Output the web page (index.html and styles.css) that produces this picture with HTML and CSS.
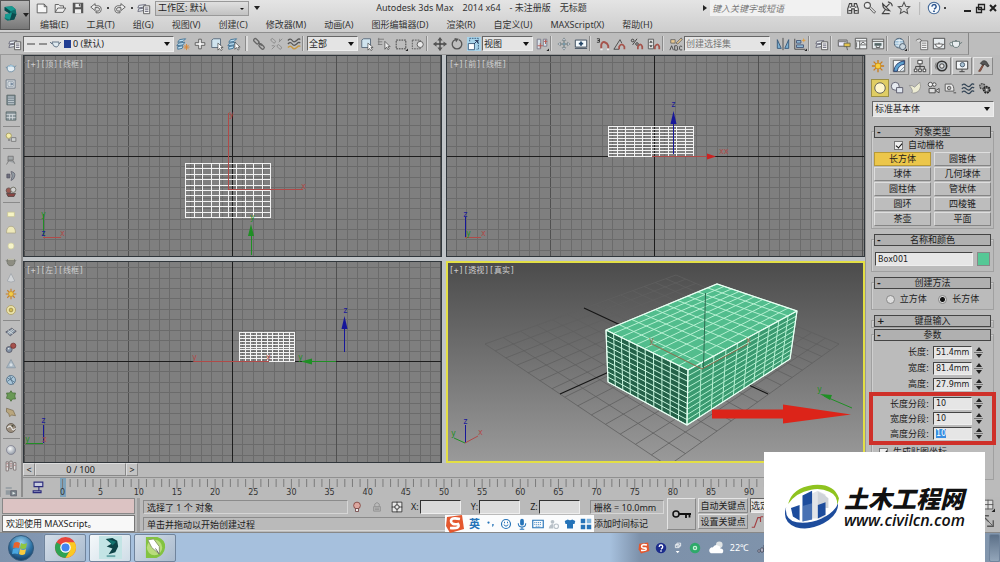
FILE: index.html
```html
<!DOCTYPE html>
<html lang="zh-CN">
<head>
    <meta charset="UTF-8">
    <meta name="viewport" content="width=device-width, initial-scale=1.0">
    <title>Autodesk 3ds Max 2014 x64 - 未注册版 无标题</title>
    <link rel="stylesheet" href="styles.css">
</head>
<body>
    <svg class="defs" aria-hidden="true">
        <defs>
            <linearGradient id="sky" x1="0" y1="0" x2="0" y2="1">
                <stop offset="0" stop-color="#4b4b4b"/><stop offset="1" stop-color="#9b9b9b"/>
            </linearGradient>
            <radialGradient id="ball" cx=".4" cy=".35" r=".7">
                <stop offset="0" stop-color="#fff"/><stop offset="1" stop-color="#8792a0"/>
            </radialGradient>
            <radialGradient id="orb" cx=".5" cy=".3" r=".7">
                <stop offset="0" stop-color="#9fd4ee"/><stop offset=".6" stop-color="#2f75a8"/><stop offset="1" stop-color="#173e66"/>
            </radialGradient>

            <symbol id="i-new" viewBox="0 0 16 16"><path d="M2.500 3.500h8l3 3v7h-11zM10.500 3.500v3h3" fill="#f6f6f6" stroke="#555"/></symbol>
            <symbol id="i-open" viewBox="0 0 16 16"><path d="M2.500 13V4h4l1.500 1.500h4V8M2.500 13l3-5h9l-3 5z" fill="#eee" stroke="#555"/></symbol>
            <symbol id="i-save" viewBox="0 0 16 16"><path d="M2 2h12v12H2z" fill="#555"/><path d="M5 3h6v4H5zM4.500 9.500h7V14h-7z" fill="#eee"/><path d="M9 3.500h1.500v2.500H9z" fill="#555"/></symbol>
            <symbol id="i-undo" viewBox="0 0 16 16"><path d="M2 7l5-4v2.500h4q3 .5 3 4t-3 4H8v-2h2.500q1.500 0 1.500-2t-2-2H7V11z" fill="#eee" stroke="#555"/></symbol>
            <symbol id="i-redo" viewBox="0 0 16 16"><path d="M14 7L9 3v2.500H5q-3 .5-3 4t3 4h3v-2H5.500Q4 11.500 4 9.500t2-2h3V11z" fill="#eee" stroke="#555"/></symbol>
            <symbol id="i-list" viewBox="0 0 16 16"><path d="M2 5l8-1-2 3-7 1zM2 9l7-1-2 3-6 1z" fill="#e8eef2" stroke="#667"/><path d="M7.500 5.500h7v9h-7z" fill="#f4f4f4" stroke="#555"/><path d="M9 8h4M9 10h4M9 12h4" stroke="#667"/></symbol>
            <symbol id="i-laynew" viewBox="0 0 16 16"><path d="M4 3l7-1-3 3-6 1zM3 7l7-1-2 3-7 1zM2 11l6-1-1 3-5 1z" fill="#bfe0f4" stroke="#3d6f92"/><path d="M12 8v7M8.500 11.500h7M9.500 9l5 5M14.500 9l-5 5" stroke="#d98735"/></symbol>
            <symbol id="i-plus" viewBox="0 0 16 16"><path d="M6.500 2.500h3v4h4v3h-4v4h-3v-4h-4v-3h4z" fill="#f4f4f4" stroke="#555"/></symbol>
            <symbol id="i-selbox" viewBox="0 0 16 16"><path d="M2 3.500l2-1.500h8v8l-2 2H2z" fill="#cfe3ee" stroke="#567"/><path d="M9 7v8l2-2 1.500 2.500 1.500-1-1.500-2.500H15z" fill="#fff" stroke="#333" stroke-width=".7"/></symbol>
            <symbol id="i-laysel" viewBox="0 0 16 16"><path d="M4 3l7-1-3 3-6 1zM3 7l7-1-2 3-7 1zM2 11l6-1-1 3-5 1z" fill="#bfe0f4" stroke="#3d6f92"/><path d="M9 6v8l2-2 1.500 3 1.500-1-1.500-2.500H15z" fill="#fff" stroke="#333" stroke-width=".7"/></symbol>
            <symbol id="i-link" viewBox="0 0 16 16"><g fill="none" stroke="#666" stroke-width="1.500"><rect x="1" y="3" width="7" height="3.500" rx="1.700" transform="rotate(45 4 4)"/><rect x="7" y="9" width="7" height="3.500" rx="1.700" transform="rotate(45 10 10)"/><path d="M6 6l4 4"/></g></symbol>
            <symbol id="i-unlink" viewBox="0 0 16 16"><g fill="none" stroke="#888"><rect x="1" y="3" width="6" height="3" rx="1.500" transform="rotate(45 4 4)"/><rect x="8" y="10" width="6" height="3" rx="1.500" transform="rotate(45 11 11)"/><path d="M14 2l-4 4M6 10l-4 4M11 2v3M2 10h3"/></g></symbol>
            <symbol id="i-bind" viewBox="0 0 16 16"><path d="M1 4q3-3 5 0t5 0 4-1M1 8q3-3 5 0t5 0 4-1" fill="none" stroke="#555" stroke-width="1.400"/><path d="M1 12q3-3 5 0t5 0 4-1" fill="none" stroke="#c79a45" stroke-width="1.600"/></symbol>
            <symbol id="i-byname" viewBox="0 0 16 16"><path d="M1 2.500h7M1 5.500h5M1 8.500h5M2 1v8" stroke="#777"/><path d="M9 5v9l2-2.500 1.500 3 1.500-1-1.500-2.500H15z" fill="#eee" stroke="#444" stroke-width=".8"/></symbol>
            <symbol id="i-region" viewBox="0 0 16 16"><path d="M2.500 3.500h11v10h-11z" fill="none" stroke="#333" stroke-dasharray="2 1"/><path d="M16 13v3h-3z" fill="#222"/></symbol>
            <symbol id="i-window" viewBox="0 0 16 16"><path d="M1.500 3.500h9v10h-9z" fill="none" stroke="#555" stroke-dasharray="2 1"/><circle cx="10.500" cy="8.500" r="3.500" fill="#e9e9e9" stroke="#555"/></symbol>
            <symbol id="i-move" viewBox="0 0 16 16"><path d="M8 1v14M1 8h14" stroke="#444" stroke-width="1.500"/><path d="M8 0l3 4H5zM8 16l3-4H5zM0 8l4-3v6zM16 8l-4-3v6z" fill="#555"/></symbol>
            <symbol id="i-rotate" viewBox="0 0 16 16"><path d="M10 3a5.500 5.500 0 1 1-4 0" fill="none" stroke="#555" stroke-width="1.500"/><path d="M5 1l5 1-3 4z" fill="#555"/></symbol>
            <symbol id="i-scale" viewBox="0 0 16 16"><path d="M0 0h16v16H0z" fill="#a9d4ea"/><path d="M1.500 7.500h7v7h-7z" fill="#fff" stroke="#357"/><path d="M3 5V1.500h10V14h-2" fill="none" stroke="#357" stroke-dasharray="2 1"/><path d="M8 8l4-4M9 4h3v3" fill="none" stroke="#235"/></symbol>
            <symbol id="i-pivot" viewBox="0 0 16 16"><path d="M2.500 2.500h4v11h-4zM9.500 2.500h4v8h-4z" fill="#d9e3ea" stroke="#778"/><path d="M6 7v6M3 10h6M10 5h4M12 3v5" stroke="#b6534c"/><path d="M16 13v3h-3z" fill="#222"/></symbol>
            <symbol id="i-manip" viewBox="0 0 16 16"><path d="M8 2v12M2 8h12" stroke="#566"/><path d="M8 1l2 3H6zM8 15l2-3H6zM1 8l3-2v4zM15 8l-3-2v4z" fill="#dde" stroke="#677" stroke-width=".7"/><circle cx="8" cy="8" r="1.500" fill="#79a"/></symbol>
            <symbol id="i-keybd" viewBox="0 0 16 16"><path d="M1.500 3.500h13v8h-13z" fill="#f5fafd" stroke="#345"/><path d="M1 13h14" stroke="#345"/><path d="M8 5v5M5.500 7.500h5" stroke="#246" stroke-width="2"/></symbol>
            <symbol id="i-magnet" viewBox="0 0 16 16"><path d="M6 13V9q1-4 4-3t4 4v3" fill="none" stroke="#a5544c" stroke-width="2.200"/><path d="M5 14h2.500M12.500 14H15" stroke="#eee" stroke-width="2"/><path d="M1 2h3v2H2h2v2H1" fill="none" stroke="#333"/></symbol>
            <symbol id="i-angle" viewBox="0 0 16 16"><path d="M1 14L8 3l2 4M1 14h6" fill="none" stroke="#444"/><path d="M7 14v-3q3-5 6 0v3" fill="none" stroke="#a5544c" stroke-width="2"/></symbol>
            <symbol id="i-pct" viewBox="0 0 16 16"><path d="M8 2L3 9" stroke="#333"/><circle cx="3" cy="4" r="1.500" fill="none" stroke="#333"/><circle cx="8" cy="8" r="1.500" fill="none" stroke="#333"/><path d="M9 14v-3q3-5 5 0v3" fill="none" stroke="#a5544c" stroke-width="2"/></symbol>
            <symbol id="i-spin" viewBox="0 0 16 16"><path d="M1.500 2.500h6v11h-6z" fill="#ddd" stroke="#555"/><path d="M4.500 4l2 2.500h-4zM4.500 12l2-2.500h-4z" fill="#444"/><path d="M9 14v-3q3-5 5 0v3" fill="none" stroke="#a5544c" stroke-width="2"/></symbol>
            <symbol id="i-named" viewBox="0 0 16 16"><path d="M2 3h5v4H2zM8 7l6-6 1 2-5 5z" fill="#e8c890" stroke="#555" stroke-width=".8"/><path d="M1 15l2-5 2 5M6.500 10v5h3q1-1 0-2.500 1-2-.5-2.500zM15 11q-3-2-3 1.500t3 2" fill="none" stroke="#444"/></symbol>
            <symbol id="i-mirror" viewBox="0 0 16 16"><path d="M1.500 13V3L6 13zM14.500 13V3L10 13z" fill="#7db1d3" stroke="#357"/><path d="M8 1v14" stroke="#444"/></symbol>
            <symbol id="i-align" viewBox="0 0 16 16"><path d="M2 2v12h12" fill="none" stroke="#444"/><path d="M4 4h5v3H4zM4 9h8v3H4z" fill="#8fb8d2" stroke="#457"/><path d="M12 1l1 2 2 .5-2 1-.5 2-1-2-2-.5 2-1z" fill="#e2a13f"/><path d="M16 13v3h-3z" fill="#222"/></symbol>
            <symbol id="i-ribbon" viewBox="0 0 16 16"><path d="M1.500 3.500h10v7h-10z" fill="#eef" stroke="#555"/><path d="M2 4h9v2H2z" fill="#888"/><path d="M8 7h7v4H8z" fill="#e3c34d" stroke="#665"/><path d="M11 11l1 4" stroke="#555"/></symbol>
            <symbol id="i-curve" viewBox="0 0 16 16"><path d="M1.500 1.500h13v12h-13zM1.500 4.500h13M6.500 4.500v9M6.500 9h8" fill="#f0f3f5" stroke="#555"/><path d="M3 6v6M8 8q2-4 5 0" fill="none" stroke="#555"/></symbol>
            <symbol id="i-schem" viewBox="0 0 16 16"><path d="M1.500 2.500h13v11h-13zM1.500 5h13" fill="#e7ecef" stroke="#555"/><path d="M4 7h8v3H4z" fill="#566"/><path d="M6 10v2h4v-2" fill="none" stroke="#555"/></symbol>
            <symbol id="i-mat" viewBox="0 0 16 16"><circle cx="7" cy="7" r="5.500" fill="#9fc0d8" stroke="#456"/><path d="M3 4h8M2 7h10M3 10h8M7 2v10" stroke="#e8f2f8"/><circle cx="11" cy="11" r="3.500" fill="#c9d5dd" stroke="#456"/><path d="M16 13v3h-3z" fill="#222"/></symbol>
            <symbol id="i-rset" viewBox="0 0 16 16"><path d="M1 4q5-4 7 1l-3 1" fill="#ddd" stroke="#666"/><path d="M6.500 4.500h8v10h-8z" fill="#f2f2f2" stroke="#666"/><path d="M8 7h5M8 9.500h5M8 12h5" stroke="#777"/></symbol>
            <symbol id="i-rframe" viewBox="0 0 16 16"><path d="M1.500 1.500h13v12h-13z" fill="#e7ecef" stroke="#444"/><path d="M4 8h8q0 4-4 4T4 8zM12 9l2-1M4 9L2.500 8M7 7h2" fill="#fff" stroke="#555"/></symbol>
            <symbol id="i-teapot" viewBox="0 0 16 16"><path d="M4 5h8q1 7-4 7T4 5zM12 8l3-2M4 7Q1 5 1 8t4 2M7 4h2" fill="#e9eef0" stroke="#677"/></symbol>

            <symbol id="i-star" viewBox="0 0 16 16"><path d="M8 1.500l2 4.500 4.500.500-3.300 3 1 4.700L8 11.800l-4.200 2.400 1-4.700L1.500 6.500 6 6z" fill="none" stroke="#555" stroke-width="1.200"/></symbol>
            <symbol id="i-bino" viewBox="0 0 16 16"><path d="M2 14V9l2-6h2.500v3h3V3H12l2 6v5h-4.500V9h-3v5zM4 7h2M10 7h2M3 11h3M10 11h3" fill="#eee" stroke="#444" stroke-width="1.300"/></symbol>
            <symbol id="i-key" viewBox="0 0 16 16"><circle cx="5" cy="5" r="3.500" fill="#eee" stroke="#555" stroke-width="1.300"/><path d="M7 8l5.500 6 2-1.500L9 7" fill="#ddd" stroke="#555"/></symbol>
            <symbol id="i-sat" viewBox="0 0 16 16"><path d="M3 3q0 7 8 8zM3 14l3-4M2 14.500h9M7 7l4-4M9 1q5 1 5 5" fill="#ddd" stroke="#444" stroke-width="1.300"/></symbol>
            <symbol id="i-help" viewBox="0 0 16 16"><circle cx="8" cy="8" r="6.500" fill="#f4f8fc" stroke="#456a99" stroke-width="1.200"/><path d="M5.500 6.500Q6 4 8 4t2.400 2T8 9.300" fill="none" stroke="#2f5791" stroke-width="1.700"/><path d="M7 10.800h2v1.800H7z" fill="#2f5791"/></symbol>

            <symbol id="i-sun" viewBox="0 0 16 16"><path d="M8 1v14M1 8h14M3 3l10 10M13 3L3 13" stroke="#c97c1c" stroke-width="1.500"/><circle cx="8" cy="8" r="3.300" fill="#f8cf3c" stroke="#c98a1c"/></symbol>
            <symbol id="i-modify" viewBox="0 0 16 16"><path d="M1.500 1.500h13v13h-13z" fill="#f2f6f8" stroke="#555"/><path d="M2 14Q3 4 14 2v4Q7 7 6 14z" fill="#5fa3d0" stroke="#236"/><path d="M9 14l5-5M12 14l2-2" stroke="#678"/></symbol>
            <symbol id="i-hier" viewBox="0 0 16 16"><path d="M5.500 1.500h5v4h-5zM1.500 11.500h3v3h-3zM6.500 11.500h3v3h-3zM11.500 11.500h3v3h-3z" fill="#fff" stroke="#333"/><path d="M8 6v5M3 11V8.500h10V11" fill="none" stroke="#333"/></symbol>
            <symbol id="i-motion" viewBox="0 0 16 16"><circle cx="9" cy="8" r="5.500" fill="#b9c0c5" stroke="#333" stroke-width="1.800"/><circle cx="9" cy="8" r="2.500" fill="#e8e8e8" stroke="#333"/><path d="M2.500 4Q0 8 2.500 12" fill="none" stroke="#777"/></symbol>
            <symbol id="i-display" viewBox="0 0 16 16"><path d="M1.500 2.500h13v9h-13zM5 14.500h6M8 12v2" fill="#f4f7f9" stroke="#333"/><circle cx="8.500" cy="6.500" r="2.500" fill="#a9c3d6" stroke="#456"/></symbol>
            <symbol id="i-hammer" viewBox="0 0 16 16"><path d="M8 6l2-1.500L5 14H3z" fill="#a9534a" stroke="#643"/><path d="M5 5Q8 0 12 3l3 5-2 1-3-3-2 1z" fill="#555" stroke="#222" stroke-width=".7"/></symbol>
            <symbol id="i-sphere" viewBox="0 0 16 16"><circle cx="8" cy="8" r="6" fill="#fff7cd" stroke="#555"/></symbol>
            <symbol id="i-shapes" viewBox="0 0 16 16"><circle cx="6" cy="6" r="4.500" fill="#e6eaf0" stroke="#556"/><path d="M7.500 7.500h7v6h-7z" fill="#dfe5ee" stroke="#556"/></symbol>
            <symbol id="i-light" viewBox="0 0 16 16"><path d="M1.500 5q4 0 6 2l6-5.500q2 5-.5 9-5 5-9 2.500 3-1-2.500-8z" fill="#ecebd2" stroke="#888" stroke-width=".8"/></symbol>
            <symbol id="i-camera" viewBox="0 0 16 16"><circle cx="5" cy="4" r="2.500" fill="#eee" stroke="#444"/><circle cx="9.500" cy="4" r="2" fill="#eee" stroke="#444"/><path d="M3.500 8.500h7v5h-7zM11 11l4-2.500v5z" fill="#ddd" stroke="#444"/></symbol>
            <symbol id="i-tape" viewBox="0 0 16 16"><path d="M2.500 3.500h7q3 1 3 8h-10z" fill="#e8e8e8" stroke="#555"/><circle cx="7" cy="8" r="2" fill="#bbb" stroke="#555"/><path d="M12 13.500h3" stroke="#444"/></symbol>
            <symbol id="i-waves" viewBox="0 0 16 16"><path d="M1 5q2-3 5 0t5 0 4-1M1 9q2-3 5 0t5 0 4-1M1 13q2-3 5 0t5 0 4-1" fill="none" stroke="#345" stroke-width="1.400"/></symbol>
            <symbol id="i-gears" viewBox="0 0 16 16"><circle cx="5" cy="6" r="3" fill="#999" stroke="#444" stroke-width="1.500" stroke-dasharray="2 1"/><circle cx="10" cy="10" r="3.500" fill="#777" stroke="#222" stroke-width="2" stroke-dasharray="2 1"/><circle cx="10" cy="10" r="1" fill="#eee"/></symbol>

            <symbol id="i-cloudpot" viewBox="0 0 16 16"><path d="M3 6q5-4 9 0 3 5-3 7-7 1-6-7zM12 7l3-2M3 8L1 7" fill="#e8f2f8" stroke="#58809c"/><path d="M5 6q3-2 6 0" stroke="#9cc5dd" stroke-width="2" fill="none"/></symbol>
            <symbol id="i-pane" viewBox="0 0 16 16"><path d="M1.500 2.500h12v11h-12z" fill="#dbe1e4" stroke="#567"/><path d="M4 5h7v6H4z" fill="#f6f8f9" stroke="#789"/><path d="M6 8h4M8 6l2 2-2 2" stroke="#246" fill="none"/></symbol>
            <symbol id="i-calc" viewBox="0 0 16 16"><path d="M2.500 1.500h11v13h-11z" fill="#778791" stroke="#455"/><path d="M4 4h8M4 7h8M4 10h8M4 13h8" stroke="#d4dde1"/></symbol>
            <symbol id="i-grid" viewBox="0 0 16 16"><path d="M1.500 2.500h13v11h-13z" fill="#8a979e" stroke="#455"/><path d="M2 6h12M2 10h12M6 6v7M10 6v7" stroke="#d8dfe2"/></symbol>
            <symbol id="i-bulb" viewBox="0 0 16 16"><circle cx="5" cy="5" r="3.500" fill="#fbf3a8" stroke="#998f48"/><path d="M4 9h3v3H4z" fill="#888"/><path d="M8.500 7.500h6v5h-6z" fill="#cfd3d4" stroke="#666"/></symbol>
            <symbol id="i-seat" viewBox="0 0 16 16"><path d="M4 3h7v5H4zM3 9h8l2 4M5 9l-3 5" fill="#a2a7aa" stroke="#666"/></symbol>
            <symbol id="i-speaker" viewBox="0 0 16 16"><path d="M2.500 5.500h4v5h-4z" fill="#667" stroke="#445"/><path d="M8 2q6 1 5 6t-5 6q3-6 0-12z" fill="#8b969e" stroke="#556"/></symbol>
            <symbol id="i-car" viewBox="0 0 16 16"><circle cx="5" cy="6" r="3.500" fill="#995047" stroke="#544"/><circle cx="11" cy="5" r="3.500" fill="#d4d4d4" stroke="#554"/><path d="M2 10h12l-2 4H4z" fill="#833a36" stroke="#433"/></symbol>
            <symbol id="i-card" viewBox="0 0 16 16"><path d="M3.500 5.500h9v6h-9z" fill="#fdfbc4" stroke="#c9c692"/></symbol>
            <symbol id="i-dome" viewBox="0 0 16 16"><path d="M2 12Q2 3 8 3t6 9z" fill="#f4eeba" stroke="#aaa380"/></symbol>
            <symbol id="i-glow" viewBox="0 0 16 16"><circle cx="8" cy="8" r="4" fill="#fdfbcb" stroke="#d6d3a0"/></symbol>
            <symbol id="i-pot" viewBox="0 0 16 16"><path d="M3 5h10q1 8-5 8T3 5zM13 7l2-1M3 7L1 6" fill="#88897c" stroke="#66685e"/><path d="M4 4.500h8" stroke="#bfbfaa" stroke-width="2"/></symbol>
            <symbol id="i-cone" viewBox="0 0 16 16"><path d="M8 2l5 10q-5 3-10 0z" fill="#d5d8dc" stroke="#9ba1a8"/></symbol>
            <symbol id="i-ring" viewBox="0 0 16 16"><circle cx="8" cy="8" r="6" fill="#f1e8a8" stroke="#a59453"/><circle cx="8" cy="8" r="2.500" fill="#d5bb48" stroke="#8d7b34"/></symbol>
            <symbol id="i-plane" viewBox="0 0 16 16"><path d="M1 8l8-5 6 4-8 6z" fill="#7f90a0" stroke="#445"/><path d="M3 10l8-6M5 11l8-6M4 6l7 5" stroke="#dfe6ea"/></symbol>
            <symbol id="i-balls" viewBox="0 0 16 16"><circle cx="5.500" cy="10" r="4" fill="#7d8ea3" stroke="#445"/><circle cx="11" cy="5" r="3.500" fill="#a44640" stroke="#622"/><circle cx="5" cy="9" r="1" fill="#fff"/></symbol>
            <symbol id="i-tri" viewBox="0 0 16 16"><path d="M8 2l6 11H2z" fill="#a9b9c6" stroke="#8193a0"/><circle cx="8" cy="9" r="2" fill="#dce5ea"/></symbol>
            <symbol id="i-globe" viewBox="0 0 16 16"><circle cx="8" cy="8" r="6" fill="#a9c8dc" stroke="#41627c"/><path d="M3 5l10 6M3 10l8-6M6 2l5 12" stroke="#41627c"/></symbol>
            <symbol id="i-leaf" viewBox="0 0 16 16"><path d="M8 1l2 3 4 0-1 4 1 4-4 0-2 3-2-3-4-1 1-4-1-3 4 0z" fill="#61964a" stroke="#3c662c"/></symbol>
            <symbol id="i-hand" viewBox="0 0 16 16"><path d="M2 3l9 3 3 7-5-1-3 2-1-4-3-2z" fill="#b9a478" stroke="#786848"/></symbol>
            <symbol id="i-marble" viewBox="0 0 16 16"><circle cx="8" cy="8" r="6" fill="#9a8c7a" stroke="#4b433a"/><path d="M3 8q4-5 6 0t5 0" stroke="#eee" fill="none" stroke-width="1.500"/><circle cx="10" cy="5" r="1.500" fill="#443"/></symbol>
            <symbol id="i-silver" viewBox="0 0 16 16"><circle cx="8" cy="8" r="6" fill="url(#ball)" stroke="#778"/></symbol>
            <symbol id="i-bars" viewBox="0 0 16 16"><path d="M1.500 2.500h3v12h-3zM6.500 1.500h3v10h-3zM11.500 3.500h3v10h-3z" fill="#f2f2f2" stroke="#655"/><path d="M2 5h2M7 5h2M12 7h2M2 9h2M7 8h2" stroke="#955"/></symbol>
            <symbol id="i-mini" viewBox="0 0 16 16"><path d="M1 3h8v2H1zM1 7h6v6H1z" fill="#8d979d"/><path d="M7.500 7.500h8v7h-8z" fill="#6f7b83" stroke="#556"/><path d="M10 9l4 2-4 2z" fill="#e6eaec"/></symbol>
            <symbol id="i-track" viewBox="0 0 16 16"><path d="M3.500 2.500h10v5h-10zM2.500 12.500h9v2h-9zM9 8v4" fill="#c8cce0" stroke="#2b2b7c" stroke-width="1.300"/></symbol>
            <symbol id="i-iso" viewBox="0 0 16 16"><circle cx="8" cy="6" r="4.500" fill="#dca8a0" stroke="#7a342f"/><path d="M6 10h4v4H6z" fill="#eee" stroke="#633"/></symbol>
            <symbol id="i-lock" viewBox="0 0 16 16"><path d="M5 7V4q3-4 6 0v3M3.500 7.500h9v6h-9zM5 9.500h6M5 11.500h6" fill="none" stroke="#888"/></symbol>
            <symbol id="i-abs" viewBox="0 0 16 16"><path d="M1.500 1.500h13v13h-13z" fill="#e9e9e9" stroke="#222"/><circle cx="8" cy="8" r="3" fill="none" stroke="#222"/><path d="M8 1v5M8 10v5M1 8h5M10 8h5" stroke="#222"/></symbol>
            <symbol id="i-nav" viewBox="0 0 16 16"><path d="M2.500 2.500h11v10h-11zM8 2v11M2 7.500h12" fill="#ddd" stroke="#555"/><path d="M16 12v4h-4z" fill="#222"/></symbol>
            <symbol id="i-max" viewBox="0 0 16 16"><path d="M2 9V2h7M2 2l7 7M7 14h7V7" fill="none" stroke="#555" stroke-width="1.500"/><path d="M8 8l5 5" stroke="#555"/></symbol>
            <symbol id="i-3ds" viewBox="0 0 30 30"><path d="M5 4l10-1 5 4 1 7-3 7-9 2-4-3 1-6 6-1-7-4z" fill="#0e6f6c"/><path d="M5 4l10-1 5 4-7 3zM6 14l9-2 5 3-8 6-7-2z" fill="#159a90"/><path d="M5 4l8 6-1 3-7-4zM15 12l6 2-3 7-6 1z" fill="#0a4b4d"/></symbol>
            <symbol id="i-sogou" viewBox="0 0 20 20"><path d="M2 3l15-2 2 14-14 4-4-7z" fill="#e4572e"/><path d="M15 5Q6 3 6 7t7 3q3 5-8 4" fill="none" stroke="#fff" stroke-width="2.600"/></symbol>
        </defs>
    </svg>

    <header class="titlebar">
        <button class="app-menu" aria-label="应用程序菜单"><svg class="logo"><use href="#i-3ds"/></svg><i class="caret"></i></button>
        <div class="title-rows">
            <div class="title-row">
                <div class="quick">
                    <button aria-label="新建"><svg><use href="#i-new"/></svg></button>
                    <button aria-label="打开"><svg><use href="#i-open"/></svg></button>
                    <button aria-label="保存"><svg><use href="#i-save"/></svg></button>
                    <button aria-label="撤消"><svg><use href="#i-undo"/></svg></button>
                    <i class="dot"></i>
                    <button aria-label="重做"><svg><use href="#i-redo"/></svg></button>
                    <i class="dot"></i>
                    <button aria-label="项目"><svg><use href="#i-list"/></svg></button>
                    <label class="combo workspace-combo"><select aria-label="工作区"><option>工作区: 默认</option></select></label>
                    <i class="caret"></i>
                </div>
                <h1><span>Autodesk 3ds Max</span><span>2014 x64</span><span>- 未注册版</span><span>无标题</span></h1>
                <div class="info">
                    <i class="caret caret-right"></i>
                    <input type="text" aria-label="搜索" placeholder="键入关键字或短语">
                    <button aria-label="查找"><svg><use href="#i-bino"/></svg></button>
                    <button aria-label="登录"><svg><use href="#i-key"/></svg></button>
                    <button aria-label="通讯中心"><svg><use href="#i-sat"/></svg></button>
                    <button aria-label="收藏"><svg><use href="#i-star"/></svg></button>
                    <i class="sep"></i>
                    <button aria-label="帮助"><svg><use href="#i-help"/></svg></button>
                    <i class="dot"></i>
                </div>
                <div class="win-buttons">
                    <button aria-label="最小化"><svg viewBox="0 0 12 12"><path d="M3 9h7" stroke="#222" stroke-width="2"/></svg></button>
                    <button aria-label="还原"><svg viewBox="0 0 12 12"><path d="M4.500 2.500h6v5h-6zM2.500 5.500h5v5h-5z" fill="#ddd" stroke="#222" stroke-width="1.300"/></svg></button>
                    <button aria-label="关闭"><svg viewBox="0 0 12 12"><path d="M3 3l6 6M9 3l-6 6" stroke="#222" stroke-width="2"/></svg></button>
                </div>
            </div>
            <nav class="menu">
                <a href="#">编辑(E)</a><a href="#">工具(T)</a><a href="#">组(G)</a><a href="#">视图(V)</a><a href="#">创建(C)</a><a href="#">修改器(M)</a><a href="#">动画(A)</a><a href="#">图形编辑器(D)</a><a href="#">渲染(R)</a><a href="#">自定义(U)</a><a href="#">MAXScript(X)</a><a href="#">帮助(H)</a>
            </nav>
        </div>
    </header>

    <div class="toolbar">
        <div class="tools">
            <button aria-label="层管理器"><svg><use href="#i-list"/></svg></button>
            <div class="combo layer-combo">
                <svg viewBox="0 0 46 12"><path d="M2 6h8M14 6h8" stroke="#777" stroke-width="1.500"/><path d="M27 4h7q0 5-3 5t-4-5zM34 6l2-2M27 6l-2-2" fill="#dfeaf0" stroke="#678"/><path d="M39 2h7v8h-7z" fill="#233f93"/></svg>
                <select aria-label="层"><option>0 (默认)</option></select>
            </div>
            <button aria-label="新建层"><svg><use href="#i-laynew"/></svg></button>
            <button aria-label="添加到层"><svg><use href="#i-plus"/></svg></button>
            <button aria-label="选择层对象"><svg><use href="#i-selbox"/></svg></button>
            <button aria-label="设为当前层"><svg><use href="#i-laysel"/></svg></button>
            <i class="sep wide"></i>
            <button aria-label="链接"><svg><use href="#i-link"/></svg></button>
            <button aria-label="取消链接"><svg><use href="#i-unlink"/></svg></button>
            <button aria-label="绑定到空间扭曲"><svg><use href="#i-bind"/></svg></button>
            <i class="sep"></i>
            <label class="combo short-combo"><select aria-label="选择过滤器"><option>全部</option></select></label>
            <button aria-label="选择"><svg><use href="#i-selbox"/></svg></button>
            <button aria-label="按名称选择"><svg><use href="#i-byname"/></svg></button>
            <button aria-label="选择区域"><svg><use href="#i-region"/></svg></button>
            <button aria-label="窗口/交叉"><svg><use href="#i-window"/></svg></button>
            <i class="sep"></i>
            <button aria-label="移动"><svg><use href="#i-move"/></svg></button>
            <button aria-label="旋转"><svg><use href="#i-rotate"/></svg></button>
            <button aria-label="缩放"><svg><use href="#i-scale"/></svg></button>
            <label class="combo short-combo"><select aria-label="参考坐标系"><option>视图</option></select></label>
            <button aria-label="轴点中心"><svg><use href="#i-pivot"/></svg></button>
            <i class="sep"></i>
            <button aria-label="操纵"><svg><use href="#i-manip"/></svg></button>
            <button aria-label="键盘快捷键覆盖"><svg><use href="#i-keybd"/></svg></button>
            <i class="sep"></i>
            <button aria-label="捕捉"><svg><use href="#i-magnet"/></svg></button>
            <button aria-label="角度捕捉"><svg><use href="#i-angle"/></svg></button>
            <button aria-label="百分比捕捉"><svg><use href="#i-pct"/></svg></button>
            <button aria-label="微调器捕捉"><svg><use href="#i-spin"/></svg></button>
            <i class="sep"></i>
            <button aria-label="编辑命名选择集"><svg><use href="#i-named"/></svg></button>
            <label class="combo set-combo"><select aria-label="命名选择集"><option>创建选择集</option></select></label>
            <button aria-label="镜像"><svg><use href="#i-mirror"/></svg></button>
            <button aria-label="对齐"><svg><use href="#i-align"/></svg></button>
            <i class="sep"></i>
            <button aria-label="层"><svg><use href="#i-list"/></svg></button>
            <i class="sep"></i>
            <button aria-label="功能区"><svg><use href="#i-ribbon"/></svg></button>
            <button aria-label="曲线编辑器"><svg><use href="#i-curve"/></svg></button>
            <button aria-label="图解视图"><svg><use href="#i-schem"/></svg></button>
            <i class="sep"></i>
            <button aria-label="材质编辑器"><svg><use href="#i-mat"/></svg></button>
            <i class="sep"></i>
            <button aria-label="渲染设置"><svg><use href="#i-rset"/></svg></button>
            <button aria-label="渲染帧窗口"><svg><use href="#i-rframe"/></svg></button>
            <button aria-label="渲染"><svg><use href="#i-teapot"/></svg></button>
        </div>
    </div>

    <main class="workspace">
        <aside class="sidebar">
            <svg><use href="#i-cloudpot"/></svg><svg><use href="#i-pane"/></svg><svg><use href="#i-calc"/></svg><svg><use href="#i-grid"/></svg>
            <hr>
            <svg><use href="#i-bulb"/></svg>
            <hr>
            <svg><use href="#i-seat"/></svg><svg><use href="#i-speaker"/></svg><svg><use href="#i-car"/></svg>
            <hr>
            <svg><use href="#i-card"/></svg><svg><use href="#i-dome"/></svg><svg><use href="#i-glow"/></svg><svg><use href="#i-pot"/></svg><svg><use href="#i-cone"/></svg><svg><use href="#i-sun"/></svg><svg><use href="#i-ring"/></svg>
            <hr>
            <svg><use href="#i-plane"/></svg><svg><use href="#i-balls"/></svg><svg><use href="#i-tri"/></svg><svg><use href="#i-globe"/></svg><svg><use href="#i-leaf"/></svg><svg><use href="#i-hand"/></svg><svg><use href="#i-marble"/></svg>
            <hr>
            <svg><use href="#i-silver"/></svg><svg><use href="#i-bars"/></svg>
            <svg class="corner"><use href="#i-mini"/></svg>
        </aside>

        <section class="stage">
            <div class="viewports">
                <svg id="top" class="view" viewBox="24 56 417 200" preserveAspectRatio="xMidYMid slice"></svg>
                <svg id="front" class="view" viewBox="447 56 417 200" preserveAspectRatio="xMidYMid slice"></svg>
                <svg id="left" class="view" viewBox="24 262 417 200" preserveAspectRatio="xMidYMid slice"></svg>
                <svg id="persp" class="view active" viewBox="448 263 415 198" preserveAspectRatio="xMidYMid slice"></svg>
            </div>
            <div class="time-slider">
                <button aria-label="上一帧">&lt;</button><button class="thumb">0 / 100</button><button aria-label="下一帧">&gt;</button>
            </div>
            <svg id="ruler" class="ruler" viewBox="23 477 842 20" preserveAspectRatio="xMinYMin slice"></svg>
        </section>

        <aside class="panel">
            <div class="tabs">
                <button class="on" aria-label="创建"><svg><use href="#i-sun"/></svg></button>
                <button aria-label="修改"><svg><use href="#i-modify"/></svg></button>
                <button aria-label="层次"><svg><use href="#i-hier"/></svg></button>
                <button aria-label="运动"><svg><use href="#i-motion"/></svg></button>
                <button aria-label="显示"><svg><use href="#i-display"/></svg></button>
                <button aria-label="实用程序"><svg><use href="#i-hammer"/></svg></button>
            </div>
            <div class="cats">
                <button class="on" aria-label="几何体"><svg><use href="#i-sphere"/></svg></button>
                <button aria-label="图形"><svg><use href="#i-shapes"/></svg></button>
                <button aria-label="灯光"><svg><use href="#i-light"/></svg></button>
                <button aria-label="摄影机"><svg><use href="#i-camera"/></svg></button>
                <button aria-label="辅助对象"><svg><use href="#i-tape"/></svg></button>
                <button aria-label="空间扭曲"><svg><use href="#i-waves"/></svg></button>
                <button aria-label="系统"><svg><use href="#i-gears"/></svg></button>
            </div>
            <label class="combo kind-combo"><select aria-label="类别"><option>标准基本体</option></select></label>

            <section class="rollout first">
                <h2><b>-</b>对象类型</h2>
                <label class="check"><input type="checkbox" checked>自动栅格</label>
                <div class="types">
                    <button class="on">长方体</button><button>圆锥体</button>
                    <button>球体</button><button>几何球体</button>
                    <button>圆柱体</button><button>管状体</button>
                    <button>圆环</button><button>四棱锥</button>
                    <button>茶壶</button><button>平面</button>
                </div>
            </section>
            <section class="rollout naming">
                <h2><b>-</b>名称和颜色</h2>
                <div class="name-row"><input type="text" aria-label="名称" value="Box001"><button class="swatch" aria-label="颜色"></button></div>
            </section>
            <section class="rollout">
                <h2><b>-</b>创建方法</h2>
                <div class="radios">
                    <label><input type="radio" name="method">立方体</label>
                    <label><input type="radio" name="method" checked>长方体</label>
                </div>
            </section>
            <section class="rollout">
                <h2><b>+</b>键盘输入</h2>
            </section>
            <section class="rollout params">
                <h2><b>-</b>参数</h2>
                <div class="field"><label for="len">长度:</label><input id="len" type="text" value="51.4mm"><button class="spin" aria-label="调整长度"></button></div>
                <div class="field"><label for="wid">宽度:</label><input id="wid" type="text" value="81.4mm"><button class="spin" aria-label="调整宽度"></button></div>
                <div class="field"><label for="hei">高度:</label><input id="hei" type="text" value="27.9mm"><button class="spin" aria-label="调整高度"></button></div>
                <div class="segments">
                    <div class="field"><label for="lseg">长度分段:</label><input id="lseg" type="text" value="10"><button class="spin" aria-label="调整长度分段"></button></div>
                    <div class="field"><label for="wseg">宽度分段:</label><input id="wseg" type="text" value="10"><button class="spin" aria-label="调整宽度分段"></button></div>
                    <div class="field"><label for="hseg">高度分段:</label><input id="hseg" type="text" value="10"><button class="spin" aria-label="调整高度分段"></button></div>
                </div>
                <label class="check mapping"><input type="checkbox" checked>生成贴图坐标</label>
            </section>
        </aside>
    </main>

    <footer class="status">
        <div class="listener"><div class="macro"></div><div class="script">欢迎使用 MAXScript。</div></div>
        <div class="messages">
            <div class="line">
                <p class="well selected">选择了 1 个 对象</p>
                <svg><use href="#i-iso"/></svg><svg><use href="#i-lock"/></svg><svg><use href="#i-abs"/></svg>
                <label>X:<input type="text"></label><label>Y:<input type="text"></label><label>Z:<input type="text"></label>
                <p class="well grid-size">栅格 = 10.0mm</p>
            </div>
            <div class="line"><p class="well prompt">单击并拖动以开始创建过程</p><p class="tag">添加时间标记</p></div>
        </div>
        <button class="set-key" aria-label="设置关键点"><svg viewBox="0 0 20 10"><circle cx="4" cy="5" r="3" fill="none" stroke="#111" stroke-width="1.500"/><path d="M7 5h12M14 5v4M17.500 5v3.500" stroke="#111" stroke-width="1.800"/></svg></button>
        <div class="key-buttons"><button>自动关键点</button><button>设置关键点</button></div>
        <div class="key-filter"><label class="combo"><select aria-label="关键点过滤"><option>选定对象</option></select></label><svg viewBox="0 0 16 16"><path d="M2 14h3L9 3h3v5M12 2h3" fill="none" stroke="#a33f42" stroke-width="1.300"/></svg></div>
        <div class="nav-icons"><svg><use href="#i-nav"/></svg><svg><use href="#i-max"/></svg></div>

        <div class="ime">
            <svg class="s-logo"><use href="#i-sogou"/></svg>
            <b>英</b>
            <svg viewBox="0 0 16 16"><circle cx="6" cy="6" r="1.500" fill="#2573b8"/><path d="M11 8h2q0 3-2 4z" fill="#2573b8"/></svg>
            <svg viewBox="0 0 16 16"><circle cx="8" cy="8" r="6" fill="none" stroke="#2573b8" stroke-width="1.500"/><path d="M5 9q3 4 6 0M6 5v2M10 5v2" fill="none" stroke="#2573b8" stroke-width="1.300"/></svg>
            <svg viewBox="0 0 16 16"><rect x="5.500" y="1" width="5" height="9" rx="2.500" fill="#2573b8"/><path d="M3 7q0 5 5 5t5-5M8 12v3M5 15h6" fill="none" stroke="#2573b8" stroke-width="1.400"/></svg>
            <svg viewBox="0 0 16 16"><path d="M1 3h14v10H1z" fill="none" stroke="#2573b8" stroke-width="1.500"/><path d="M3 6h10M3 8.500h10M5 11h6" stroke="#2573b8" stroke-dasharray="1.500 1"/></svg>
            <svg viewBox="0 0 16 16"><circle cx="6" cy="5" r="2.500" fill="#b9c1c8"/><path d="M1 14q1-6 6-6v6z" fill="#b9c1c8"/><circle cx="11" cy="11" r="3" fill="none" stroke="#b9c1c8" stroke-width="1.500"/></svg>
            <svg viewBox="0 0 16 16"><path d="M1 4l4-2q3 2 6 0l4 2-1 4h-2v6H4V8H2z" fill="#2573b8"/></svg>
            <svg viewBox="0 0 16 16"><path d="M1 1h6v6H1zM1 9h6v6H1zM9 9h6v6H9z" fill="#2573b8"/><path d="M9 1h6v6H9z" fill="#7db3dc"/></svg>
        </div>
    </footer>

    <div class="taskbar">
        <button class="start" aria-label="开始"><svg viewBox="0 0 26 26"><circle cx="13" cy="13" r="12.500" fill="url(#orb)" stroke="#335a7c"/><path d="M6 8q3-2 6 0l-1 5q-3-1-6 0z" fill="#e9642c"/><path d="M13 8q3 2 6 0l-1 5q-3 2-6 0z" fill="#8fc640"/><path d="M5 14q3-1 6 0l-1 5q-3-1-6 0z" fill="#4aa6e0"/><path d="M12 14q3 2 6 0l-1 5q-3 2-6 0z" fill="#fbca3e"/></svg></button>
        <button aria-label="Chrome"><svg viewBox="0 0 24 24"><circle cx="12" cy="12" r="11" fill="#e8453c"/><path d="M2.500 6.500A11 11 0 0 0 12 23l5-8.500L12 12z" fill="#2fa353"/><path d="M12 23a11 11 0 0 0 9.500-16.500H12l5 8z" fill="#fbc922"/><circle cx="12" cy="12" r="5.500" fill="#fff"/><circle cx="12" cy="12" r="4.200" fill="#4286f0"/></svg></button>
        <button class="active" aria-label="3ds Max"><svg viewBox="0 0 24 24"><path d="M0 0h24v24H0z" fill="#c3e4e5"/><path d="M7 3l7-1 5 3 1 6-3 6-7 2 4-6-6-2 5-3z" fill="#0d4347"/><path d="M9 3l9 3-4 4z" fill="#12716d"/><path d="M8 21h9" stroke="#69a8aa" stroke-width="2"/></svg></button>
        <button aria-label="CorelDRAW"><svg viewBox="0 0 24 24"><path d="M2 1h12q9 3 8 11t-9 11H2z" fill="#83c341"/><circle cx="11" cy="12" r="8" fill="#b9dc7c"/><path d="M4 4l6-1 6 8v8L8 12z" fill="#fff" stroke="#8a9b68"/><path d="M16 19l-4-6" stroke="#666"/></svg></button>
        <div class="tray">
            <svg viewBox="0 0 20 20"><use href="#i-sogou"/></svg>
            <svg viewBox="0 0 16 16"><circle cx="8" cy="8" r="7" fill="#1c2c8c"/><path d="M5.500 6.500Q6 4 8 4t2.300 2T8 9.500M8 11v2" fill="none" stroke="#fff" stroke-width="1.800"/></svg>
            <svg viewBox="0 0 16 16"><path d="M6.500 1.500h5v4h-5zM4.500 3.500h5v4h-5z" fill="#8195ab" stroke="#fff"/><path d="M5 12h5l-2.500 3z" fill="#fff"/></svg>
            <svg viewBox="0 0 16 16"><circle cx="8" cy="8" r="7" fill="#2fa96a"/><circle cx="8" cy="8" r="3" fill="#c9f0d8"/><circle cx="8" cy="8" r="1.200" fill="#2fa96a"/></svg>
            <svg class="weather" viewBox="0 0 18 16"><circle cx="12" cy="5" r="3.500" fill="#dfe3e4"/><path d="M3 14q-3-2-1-5 2-2 3-1 2-4 6-2 3 1 2 3 4 0 3 4l-1 1z" fill="#fff"/></svg>
            <span>22℃</span>
            <svg class="signal" viewBox="0 0 12 12"><path d="M1 10h2V8H1zM4 10h2V6H4zM7 10h2V3H7z" fill="#eef" stroke="#334" stroke-width=".7"/></svg>
        </div>
        <button class="peek" aria-label="显示桌面"></button>
    </div>

    <div class="watermark">
        <svg viewBox="0 0 62 50">
            <path d="M4 22Q8 5 30 2q22-2 27 14-1 5-2 7 1-10-8-14T28 7Q12 10 4 22z" fill="#8fc31f"/>
            <path d="M29 11l6-3 8 4v25H29z" fill="#e2e4e8"/><path d="M35 9l6 3 5 4v10h-11z" fill="#cfd3d9"/>
            <path d="M19 13l10-5v30l-10 2zM7 26l9-3v16l-7-4zM35 23l8-3v13l-8 4z" fill="#1d4c9c"/>
            <path d="M19 24l10-3v17l-10 2z" fill="#8facd6" opacity=".4"/>
            <path d="M2 25q-2 13 11 16 12 2 26-4 14-7 17-16 1 12-15 21-15 8-29 4Q-3 40 2 25z" fill="#1d4c9c"/>
        </svg>
        <div><strong>土木工程网</strong><em>www.civilcn.com</em></div>
    </div>

    <script src="script.js"></script>
</body>
</html>
```

FILE: styles.css
```css
* { box-sizing: border-box; }
body {
    margin: 0;
    height: 100vh;
    display: flex;
    flex-direction: column;
    overflow: hidden;
    position: relative;
    background: #bababa;
    color: #1c1c1c;
    font: 9px/12px "Noto Sans", "Noto Sans CJK SC", sans-serif;
}
h1, h2, p { margin: 0; font-size: 9px; font-weight: normal; }
a { color: inherit; text-decoration: none; }
button, input, select { font: inherit; color: inherit; margin: 0; padding: 0; border: 0; background: none; border-radius: 0; }
select { appearance: none; width: 100%; }
input:focus, select:focus { outline: none; }
svg { display: block; flex: none; }
.defs { position: absolute; width: 0; height: 0; }

.caret { width: 0; height: 0; border: 3px solid transparent; border-top: 4px solid #222; border-bottom: 0; }
.caret-right { border: 3px solid transparent; border-left: 4px solid #222; border-right: 0; }
.dot { width: 2px; height: 2px; background: #444; }
.sep { width: 5px; height: 15px; border-left: 1px solid #8b8b8b; margin: 0; box-shadow: inset 1px 0 #d8d8d8; }
.sep.wide { width: 9px; border-left: 0; background: linear-gradient(90deg, transparent 3px, #8b8b8b 3px, #8b8b8b 4px, #ddd 4px, #ddd 6px, transparent 6px); box-shadow: none; }

.combo { position: relative; display: flex; align-items: center; background: #e4e4e4; border: 1px solid #eee; border-top-color: #666; border-left-color: #666; }
.combo::after { content: ""; position: absolute; right: 3px; top: 5px; border: 3px solid transparent; border-top: 4px solid #111; border-bottom: 0; pointer-events: none; }

/* title bar */
.titlebar { display: flex; flex: none; height: 33px; background: linear-gradient(#e4e4e4, #cdcdcd); border-bottom: 1px solid #8e8e8e; }
.app-menu { width: 30px; height: 30px; display: flex; align-items: center; background: linear-gradient(#b5b5b5, #777); border: 1px solid #555; }
.logo { width: 22px; height: 26px; }
.title-rows { flex: 1; }
.title-row { display: flex; align-items: center; height: 16px; }
.quick { display: flex; align-items: center; gap: 4px; padding-left: 5px; }
.quick svg { width: 14px; height: 14px; }
.quick .caret { margin-left: 1px; }
.workspace-combo { width: 94px; height: 15px; background: linear-gradient(#e0e0e0, #c2c2c2); border: 1px solid #999; padding-left: 2px; }
.workspace-combo::after { right: 4px; top: 6px; border-width: 2px; border-bottom: 0; }
h1 { display: flex; gap: 9px; margin: 0 auto; font-size: 9px; color: #333; }
.info { display: flex; align-items: center; gap: 3px; }
.info input { width: 131px; height: 16px; padding-left: 2px; margin-right: 2px; background: #f1f1f1; font-style: italic; }
.info input::placeholder { color: #777; opacity: 1; }
.info svg { width: 14px; height: 14px; }
.info .sep { height: 13px; margin-left: 5px; border-color: #bbb; }
.win-buttons { display: flex; gap: 1px; padding-right: 1px; margin-left: 15px; }
.win-buttons svg { width: 12px; height: 12px; }
.menu { display: flex; gap: 18px; padding: 3px 0 0 10px; color: #333; }

/* main toolbar */
.toolbar { flex: none; height: 22px; display: flex; background: #bdbdbd; }
.tools { display: flex; align-items: center; padding-left: 6px; padding-right: 4px; border-right: 1px solid #888; border-bottom: 1px solid #999; }
.tools button { width: 17px; height: 17px; display: flex; align-items: center; justify-content: center; }
.tools button svg { width: 14px; height: 14px; }
.tools > * { flex: none; }
.layer-combo { width: 151px; height: 16px; }
.layer-combo svg { width: 46px; height: 12px; margin: 0 2px 0 1px; }
.short-combo { width: 51px; height: 15px; padding-left: 1px; }
.set-combo { width: 86px; height: 15px; margin-right: 4px; padding-left: 1px; color: #777; }

/* workspace */
.workspace { flex: 1; min-height: 0; display: grid; grid-template: minmax(0, 1fr) / 23px 1fr 135px; }
.sidebar { padding-top: 5px; display: flex; flex-direction: column; align-items: center; background: #bcbcbc; border-right: 2px solid #8d8d8d; border-left: 1px solid #999; }
.sidebar svg { width: 12px; height: 12px; margin: 2px 0; opacity: .9; }
.sidebar hr { width: 17px; margin: 2px 0 3px; border: 0; border-top: 1px solid #8a8a8a; flex: none; }
.sidebar .corner { margin: auto 0 0; }
.stage { display: flex; flex-direction: column; min-width: 0; min-height: 0; }
.viewports { flex: 1; min-height: 0; display: grid; grid-template: minmax(0, 1fr) minmax(0, 1fr) / minmax(0, 1fr) minmax(0, 1fr); gap: 4px; background: #bfc3c6; }
.view { width: 100%; height: 100%; background: #7f7f7f; border: 1px solid #30363b; }
.view.active { border: 2px solid #e3df45; }
.view text { font: 8px "DejaVu Sans Mono", "Noto Sans CJK SC", monospace; }
.time-slider { flex: none; display: flex; height: 14px; }
.time-slider button { width: 12px; height: 13px; line-height: 12px; border: 1px solid #888; border-top-color: #ddd; border-left-color: #ddd; background: #c3c3c3; }
.time-slider .thumb { width: 91px; }
.ruler { width: 100%; height: 20px; border-top: 1px solid #909090; }
.ruler text { font: 8px "DejaVu Sans", sans-serif; fill: #333; text-anchor: middle; }

/* command panel */
.panel { padding: 2px 6px 0 5px; background: #bbb; border-left: 1px solid #999; overflow: hidden; font-family: "DejaVu Sans", "Noto Sans CJK SC", sans-serif; }
.tabs { display: flex; gap: 1px; height: 18px; margin-left: -3px; }
.tabs button { width: 20px; display: flex; align-items: center; justify-content: center; border: 1px solid #888; border-top-color: #e4e4e4; border-left-color: #e4e4e4; background: #c4c4c4; }
.tabs .on { border-color: transparent; background: none; }
.tabs svg, .cats svg { width: 14px; height: 14px; }
.cats { display: flex; margin-top: 4px; }
.cats button { width: 18px; height: 18px; display: flex; align-items: center; justify-content: center; }
.cats .on { background: #e0cd63; border: 1px solid #9c8f47; }
.kind-combo { height: 16px; margin: 4px 0 0 1px; }
.kind-combo select { padding-left: 2px; }
.rollout { border: 1px solid #a0a0a0; margin-top: 10px; padding: 0 2px 4px; box-shadow: inset 1px 1px #cfcfcf; }
.rollout.first { margin-top: 14px; padding-bottom: 2px; }
.rollout h2 { height: 12px; margin-top: -6px; line-height: 10px; text-align: center; background: #b0b0b0; border: 1px solid #444; position: relative; }
.rollout h2 b { position: absolute; left: 2px; }
.rollout h2:only-child { margin-bottom: -4px; }
.check { display: flex; align-items: center; gap: 5px; height: 14px; padding-left: 20px; }
input[type="checkbox"] { appearance: none; width: 9px; height: 9px; background: #eee; border: 1px solid #777; position: relative; }
input[type="checkbox"]:checked::after { content: ""; position: absolute; left: 2px; top: 0; width: 3px; height: 5px; border: solid #111; border-width: 0 1px 1px 0; transform: rotate(40deg); }
.types { display: grid; grid-template-columns: 1fr 1fr; gap: 1px 3px; }
.types button { height: 14px; line-height: 12px; border: 1px solid #858585; border-top-color: #dedede; border-left-color: #dedede; background: #bdbdbd; }
.types .on { background: #ecc64a; border-color: #b99a35; }
.naming { padding-bottom: 5px; }
.name-row { display: flex; gap: 4px; padding: 6px 1px 0; }
.panel input[type="text"] { font-size: 8px; background: #e6e6e6; border: 1px solid #eee; border-top-color: #444; border-left-color: #444; min-width: 0; padding-left: 2px; }
.name-row input { flex: 1; height: 14px; }
.swatch { width: 13px; height: 14px; background: #56c896; border: 1px solid #888; }
.radios { display: flex; justify-content: space-evenly; padding-top: 4px; }
.radios label { display: flex; align-items: center; gap: 5px; }
input[type="radio"] { appearance: none; width: 9px; height: 9px; border-radius: 50%; background: #ddd; border: 1px solid #888; }
input[type="radio"]:checked { background: radial-gradient(#111 2px, #ddd 3px); }
.params { margin-top: 6px; padding-bottom: 20px; }
.params h2 { margin-bottom: 3px; }
.field { display: flex; align-items: center; height: 16px; padding-right: 8px; }
.field label { flex: 1; text-align: right; padding-right: 4px; }
.field input { width: 39px; height: 13px; flex: none; }
.spin { width: 9px; height: 13px; margin-left: 2px; position: relative; background: linear-gradient(#bbb 6px, #777 6px, #777 7px, #bbb 7px); }
.spin::before, .spin::after { content: ""; position: absolute; left: 2px; border: 3px solid transparent; }
.spin::before { top: 1px; border-top: 0; border-bottom: 4px solid #222; }
.spin::after { bottom: 1px; border-bottom: 0; border-top: 4px solid #222; }
.segments { margin: 0 -5px; padding: 0 3px; border: 4px solid #cf3029; position: relative; }
.segments .field { height: 15px; padding-right: 6px; }
.segments input::selection { background: #3a8ee0; color: #fff; }
.check.mapping { padding-left: 5px; }

/* status bar */
.status { position: relative; flex: none; display: flex; height: 36px; padding-top: 1px; background: #bababa; border-bottom: 1px solid #888; }
.listener { width: 135px; padding-left: 2px; }
.macro { height: 16px; background: #dcc3c3; border: 1px solid #888; }
.script { height: 17px; line-height: 15px; margin-top: 1px; padding-left: 3px; background: #f8f8f8; border: 1px solid #777; }
.messages { width: 527px; padding-left: 3px; border-left: 3px solid #a0a0a0; margin-left: 2px; margin-right: 3px; }
.line { display: flex; align-items: center; height: 17px; }
.line svg { width: 12px; height: 12px; margin-right: 8px; }
.line label { display: flex; align-items: center; margin-right: 10px; gap: 1px; }
.line input { width: 41px; height: 14px; background: #dadada; border: 1px solid #eee; border-top-color: #333; border-left-color: #333; }
.well { height: 14px; line-height: 13px; padding-left: 3px; border: 1px solid #d6d6d6; border-top-color: #8b8b8b; border-left-color: #8b8b8b; }
.selected { width: 205px; margin-right: 3px; }
.grid-size { flex: 1; }
.prompt { width: 450px; }
.tag { padding-left: 1px; }
.set-key { width: 29px; height: 32px; display: flex; align-items: center; justify-content: center; border: 1px solid #888; border-top-color: #e4e4e4; border-left-color: #e4e4e4; }
.set-key svg { width: 20px; height: 10px; }
.key-buttons { display: flex; flex-direction: column; gap: 1px; width: 50px; margin-left: 2px; }
.key-buttons button { height: 15px; line-height: 13px; white-space: nowrap; border: 1px solid #888; border-top-color: #e4e4e4; border-left-color: #e4e4e4; }
.key-filter { width: 60px; margin-left: 2px; }
.key-filter .combo { height: 15px; }
.key-filter svg { width: 14px; height: 14px; margin-top: 2px; }
.nav-icons { margin-left: auto; padding-right: 5px; display: flex; flex-direction: column; gap: 2px; }
.nav-icons svg { width: 14px; height: 14px; }
.ime { position: absolute; left: 445px; bottom: 0; display: flex; align-items: center; gap: 4px; height: 17px; padding-right: 2px; background: #fbfcfd; color: #2573b8; font-size: 11px; }
.ime svg { width: 12px; height: 12px; }
.ime .s-logo { width: 20px; height: 20px; }

/* taskbar */
.taskbar { flex: none; display: flex; align-items: center; gap: 3px; height: 29px; background: linear-gradient(90deg, #7f93ad 0, #8297b2 42px, #a6c0dd 60px, #a6c0dd 610px, #7d91aa 640px, #8296ad 1000px); }
.taskbar button { width: 42px; height: 28px; display: flex; align-items: center; justify-content: center; background: linear-gradient(135deg, #d4dee9, #a9bacd); border: 1px solid #70849c; border-radius: 2px; }
.taskbar button svg { width: 23px; height: 23px; }
.taskbar .start { width: 41px; background: none; border: 0; }
.taskbar .start svg { width: 26px; height: 26px; }
.taskbar .active { background: linear-gradient(135deg, #f4f8fa, #cfdde7); }
.tray { display: flex; align-items: center; gap: 5px; margin-left: auto; margin-right: 217px; color: #fff; }
.tray svg { width: 12px; height: 12px; }
.tray .weather { width: 17px; height: 15px; margin-left: 2px; }
.tray .signal { margin-left: 3px; }
.taskbar .peek { width: 11px; background: linear-gradient(#5c7088, #93a6ba); }

/* site logo over the lower right corner */
.watermark { position: absolute; right: 15px; bottom: 0; width: 221px; height: 110px; display: flex; align-items: center; justify-content: center; background: #fff; }
.watermark svg { width: 60px; height: 48px; }
.watermark strong, .watermark em { display: block; color: #111; }
.watermark strong { font: italic 900 24px/26px "Noto Sans CJK SC", sans-serif; }
.watermark em { font: italic 600 16px/18px "Open Sans", sans-serif; }
```

FILE: script.js
```javascript
const NS = "http://www.w3.org/2000/svg";

function add(svg, tag, attrs, text) {
    const el = document.createElementNS(NS, tag);
    for (const k in attrs) el.setAttribute(k, attrs[k]);
    if (text) el.textContent = text;
    svg.appendChild(el);
    return el;
}

function path(svg, d, stroke, width, fill) {
    return add(svg, "path", { d: d, stroke: stroke, "stroke-width": width || 1, fill: fill || "none" });
}

function label(svg, x, y, text, fill) {
    add(svg, "text", { x: x, y: y, fill: fill || "#cfcfcf" }, text);
}

// construction grid of an orthographic view, origin at ox/oy
function grid(svg, x, y, ox, oy) {
    const step = 10.42;
    for (let i = -42; i <= 42; i++) {
        const gx = Math.round(ox + i * step) + 0.5;
        const gy = Math.round(oy + i * step) + 0.5;
        if (gx > x && gx < x + 420) path(svg, `M${gx} ${y}v204`, i % 10 ? "#6b6b6b" : "#505050");
        if (gy > y && gy < y + 204) path(svg, `M${x} ${gy}h420`, i % 10 ? "#6b6b6b" : "#505050");
    }
    path(svg, `M${ox + 0.5} ${y}v204M${x} ${oy + 0.5}h420`, "#1d1d1d");
}

function mesh(svg, x, y, w, h) {
    let d = "";
    for (let i = 0; i <= 10; i++) {
        d += `M${Math.round(x + i * w / 10) + 0.5} ${y}v${h + 1}M${x} ${Math.round(y + i * h / 10) + 0.5}h${w + 1}`;
    }
    path(svg, d, "#f2f2f2");
}

// maps the unit square on a quad a(0,0) b(1,0) c(1,1) d(0,1)
function project(a, b, c, d) {
    const sx = a[0] - b[0] + c[0] - d[0], sy = a[1] - b[1] + c[1] - d[1];
    const dx1 = b[0] - c[0], dx2 = d[0] - c[0], dy1 = b[1] - c[1], dy2 = d[1] - c[1];
    const det = dx1 * dy2 - dx2 * dy1;
    const g = (sx * dy2 - dx2 * sy) / det, h = (dx1 * sy - sx * dy1) / det;
    return (u, v) => {
        const w = g * u + h * v + 1;
        return [
            ((b[0] - a[0] + g * b[0]) * u + (d[0] - a[0] + h * d[0]) * v + a[0]) / w,
            ((b[1] - a[1] + g * b[1]) * u + (d[1] - a[1] + h * d[1]) * v + a[1]) / w
        ].map(n => n.toFixed(1)).join(" ");
    };
}

function quadMesh(svg, corners, n, stroke, width, fill) {
    const p = project(...corners);
    let d = "";
    for (let i = 0; i <= n; i++) {
        const t = i / n;
        d += `M${p(t, 0)}L${p(t, 1)}M${p(0, t)}L${p(1, t)}`;
    }
    if (fill) path(svg, `M${corners.join("L")}Z`, "none", 0, fill);
    path(svg, d, stroke, width);
}

const RED = "#b04a48", GREEN = "#1f8f24", BLUE = "#17179a";

const topView = document.getElementById("top");
grid(topView, 23, 55, 232, 156);
mesh(topView, 185, 163, 85, 54);
path(topView, "M228.500 190V113M228 189.500h75", RED);
label(topView, 301, 189, "x", RED);
label(topView, 229, 117, "y", RED);
path(topView, "M251.500 255v-22", GREEN);
path(topView, "M251 224l3 12h-6z", "none", 0, GREEN);
label(topView, 250, 220, "y", GREEN);
path(topView, "M43.500 236v-22", GREEN);
path(topView, "M43 237.500h18", RED);
label(topView, 41, 217, "y", GREEN);
label(topView, 60, 236, "x", RED);
label(topView, 41, 236, "z", BLUE);
label(topView, 26, 67, "[+][顶][线框]");

const front = document.getElementById("front");
grid(front, 446, 55, 654, 156);
mesh(front, 608, 126, 85, 30);
path(front, "M652 156.500h60", RED);
path(front, "M716 156.500l-9-3v6z", "none", 0, "#c22");
label(front, 719, 154, "xx", RED);
path(front, "M673.500 154v-36", BLUE);
path(front, "M673.500 111l3 13h-6z", "none", 0, BLUE);
label(front, 671, 107, "z", BLUE);
path(front, "M465.500 237v-20", BLUE);
path(front, "M465 237.500h16", RED);
label(front, 463, 217, "z", BLUE);
label(front, 481, 236, "x", RED);
label(front, 466, 236, "y", GREEN);
label(front, 449, 67, "[+][前][线框]");

const left = document.getElementById("left");
grid(left, 23, 261, 232, 361);
mesh(left, 239, 332, 55, 29);
path(left, "M194 361.500h75", RED);
label(left, 192, 360, "y", RED);
label(left, 266, 360, "x", RED);
path(left, "M302 361.500h34", GREEN);
path(left, "M301 361.500l11-3v6z", "none", 0, GREEN);
label(left, 298, 360, "y", GREEN);
path(left, "M344.500 352v-24", BLUE);
path(left, "M344.500 316l3 13h-6z", "none", 0, BLUE);
label(left, 343, 313, "z", BLUE);
path(left, "M43.500 443v-18", BLUE);
path(left, "M26 443.500h17", GREEN);
label(left, 41, 423, "z", BLUE);
label(left, 25, 442, "y", GREEN);
label(left, 42, 442, "x", RED);
label(left, 26, 273, "[+][左][线框]");

const persp = document.getElementById("persp");
add(persp, "rect", { x: 446, y: 261, width: 420, height: 204, fill: "url(#sky)" });
quadMesh(persp, [[485, 344], [676, 275], [839, 344], [668, 466]], 14, "#606060", 0.8);
path(persp, "M584 308L768 394M560 394L700 331", "#161616", 1.2);
quadMesh(persp, [[606, 330], [717, 284], [797, 311], [688, 370]], 10, "#b5f0d1", 1, "#52bd8d");
quadMesh(persp, [[606, 330], [688, 370], [687, 425], [608, 382]], 10, "#c8f7df", 1, "#246249");
quadMesh(persp, [[688, 370], [797, 311], [790, 359], [687, 425]], 10, "#b5f0d1", 1, "#3a9a70");
path(persp, "M606 330L717 284L797 311L790 359L687 425L608 382ZM606 330L688 370L797 311M688 370L687 425", "#eafff4", 1.2);
path(persp, "M652 344l50 25l46-25", "#8d6a4c");
path(persp, "M703.500 368l2-75", "#2d6b50");
label(persp, 649, 343, "y", "#9a6a4e");
label(persp, 746, 343, "x", "#9a6a4e");
path(persp, "M852 408l-28-12", GREEN);
path(persp, "M820 394l12 1-2 5z", "none", 0, GREEN);
label(persp, 817, 392, "y", GREEN);
path(persp, "M465.500 443v-18", BLUE);
path(persp, "M465 443l13-7", RED);
path(persp, "M465 443l-11-5", GREEN);
label(persp, 463, 424, "z", BLUE);
label(persp, 478, 435, "x", RED);
label(persp, 451, 436, "y", GREEN);
path(persp, "M712 409.500h71v-5l68 10-68 9v-5h-71z", "none", 0, "#dc2419");
label(persp, 449, 273, "[+][透视][真实]");

const ruler = document.getElementById("ruler");
add(ruler, "rect", { x: 60, y: 477, width: 6, height: 20, fill: "#7ea3bb" });
for (let f = 0; f <= 100; f++) {
    const x = 62.5 + f * 7.63;
    path(ruler, `M${x} 478v${f % 5 ? 8 : 10}`, "#7b7b7b");
    if (f % 5 === 0) label(ruler, x, 494, String(f), "#333");
}
add(ruler, "use", { href: "#i-track", x: 31, y: 479, width: 14, height: 14 });

const hseg = document.getElementById("hseg");
hseg.focus();
hseg.select();
```
